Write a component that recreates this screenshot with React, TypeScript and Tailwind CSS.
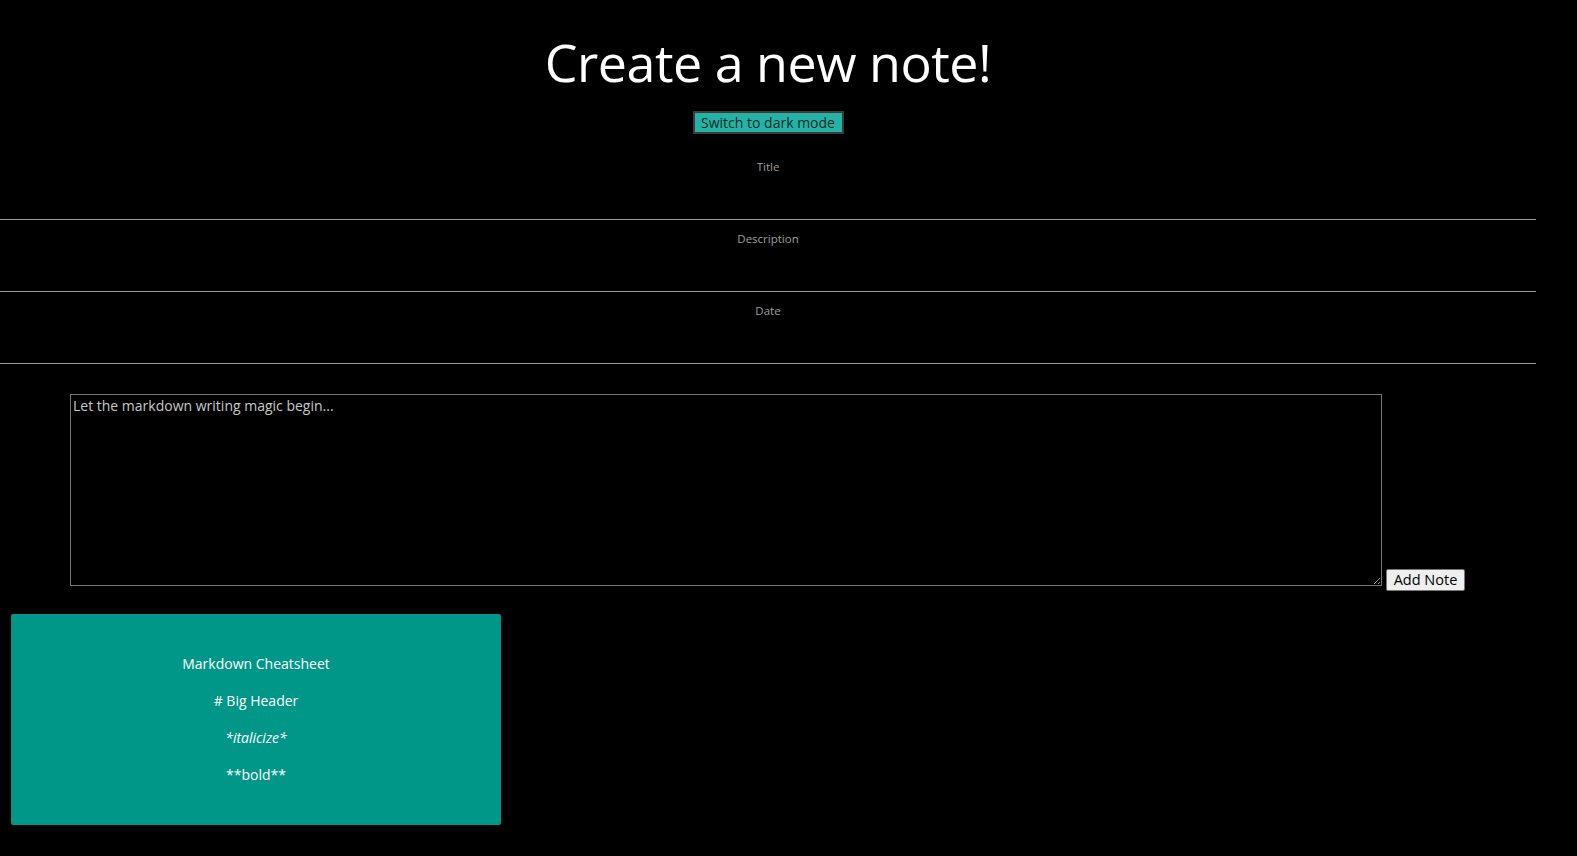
const fields = ['Title', 'Description', 'Date'];

const cheats = [
  { text: 'Markdown Cheatsheet', italic: false },
  { text: '# Big Header', italic: false },
  { text: '*italicize*', italic: true },
  { text: '**bold**', italic: false },
];

const App = () => {
  return (
    <div className="w-full min-h-screen bg-black text-white font-['Open_Sans',sans-serif]">
      <div className="w-[1536px] flex flex-col">
        <h1 className="h-[94px] pt-[30px] text-center text-[52px] leading-[64px] tracking-[-0.5px]">
          Create a new note!
        </h1>

        <div className="flex justify-center mt-[17px]">
          <button className="w-[151px] h-[23px] bg-[#26b3a5] border-2 border-[#3a3a3a] text-[#0b2b29] text-[14px] leading-none">
            Switch to dark mode
          </button>
        </div>

        <div className="flex flex-col mt-[14px]">
          {fields.map((label) => (
            <div key={label} className="h-[72px] border-b border-[#9e9e9e] flex justify-center">
              <span className="mt-[11px] h-[16px] text-[11.5px] leading-[16px] text-[#9e9e9e]">{label}</span>
            </div>
          ))}
        </div>

        <div className="flex items-end gap-[4px] mt-[30px] pl-[70px]">
          <textarea
            className="w-[1312px] h-[192px] mb-[5px] bg-black border border-[#767676] px-[2px] py-[1px] text-[14px] leading-[20px] text-white placeholder:text-[#c8c8c8] resize-y outline-none"
            placeholder="Let the markdown writing magic begin..."
          />
          <button className="w-[79px] h-[22px] bg-[#efefef] border border-[#767676] rounded-[2px] text-black text-[14.5px] leading-none">
            Add Note
          </button>
        </div>

        <div className="mt-[23px] ml-[11px] w-[490px] h-[211px] bg-[#009688] rounded-[2px] flex flex-col items-center justify-center gap-[17px]">
          {cheats.map((c) => (
            <p key={c.text} className={`text-[14px] leading-[20px] text-white ${c.italic ? 'italic' : ''}`}>
              {c.text}
            </p>
          ))}
        </div>
      </div>
    </div>
  );
};

export default App;
